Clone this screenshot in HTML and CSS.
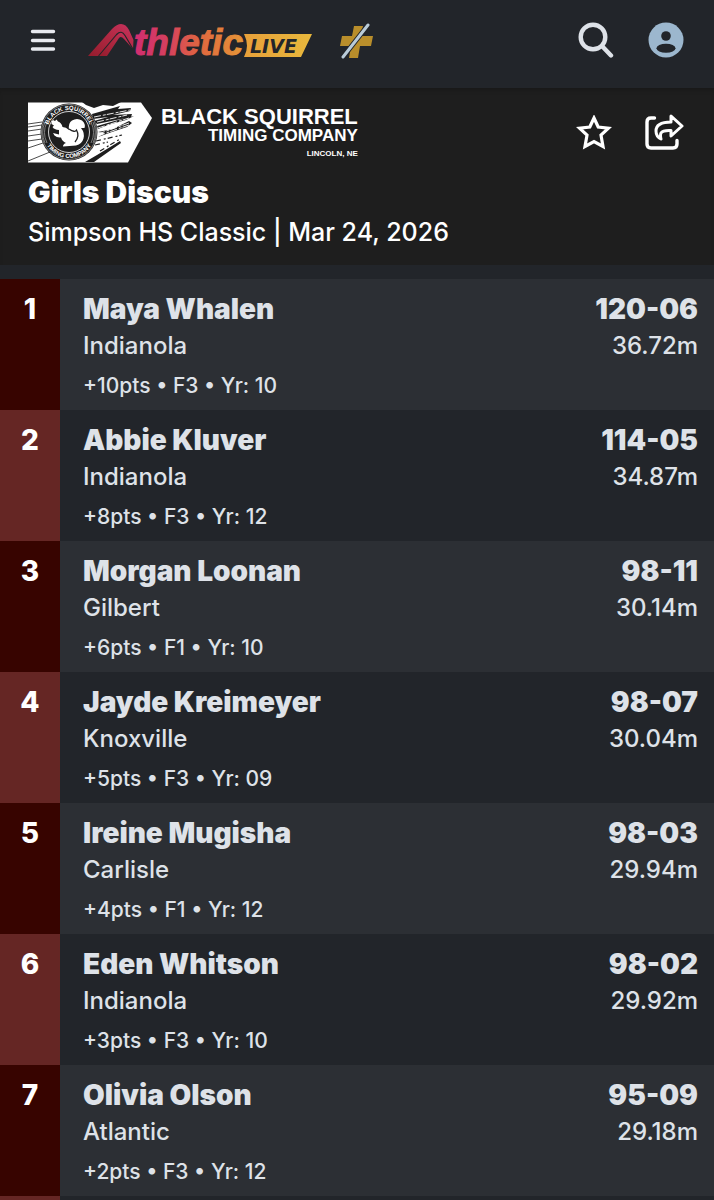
FILE: index.html
```html
<!DOCTYPE html>
<html lang="en">
<head>
<meta charset="utf-8">
<meta name="viewport" content="width=device-width, initial-scale=1">
<title>Girls Discus | Simpson HS Classic</title>
<link rel="stylesheet" href="styles.css">
</head>
<body>
<header class="topbar">
  <button class="icon-button" type="button" aria-label="Menu">
    <svg width="30" height="30" viewBox="0 0 30 30" stroke="#e8eaf0" stroke-width="3.4" stroke-linecap="round"><path d="M4.5 6.5h21M4.5 15.5h21M4.5 24h21"/></svg>
  </button>
  <a class="brand" href="#" aria-label="AthleticLIVE">
    <svg width="226" height="52" viewBox="0 -6 226 52">
      <defs>
        <linearGradient id="swoosh" x1="0" y1="1" x2="1" y2="0"><stop offset="0" stop-color="#941c2d"/><stop offset=".6" stop-color="#b42a45"/><stop offset="1" stop-color="#c83260"/></linearGradient>
        <linearGradient id="word" gradientUnits="userSpaceOnUse" x1="46" y1="0" x2="158" y2="0"><stop offset="0" stop-color="#d12d70"/><stop offset=".3" stop-color="#d5405f"/><stop offset=".6" stop-color="#e0683f"/><stop offset="1" stop-color="#e69a36"/></linearGradient>
        <linearGradient id="tag" x1="0" y1="0" x2="1" y2="0"><stop offset="0" stop-color="#e7a03a"/><stop offset="1" stop-color="#e8b83c"/></linearGradient>
      </defs>
      <path fill="url(#swoosh)" d="M0 36 24 9Q29 4 33 4 38 4 41 10L45.500 20 45 29 37 16Q33.500 10 29 15L12 36Z"/>
      <path fill="url(#swoosh)" d="M11 36 29 15Q33.500 10 37 16L45 29 36 19Q33 15.500 31 18L19 36Z"/>
      <path fill="none" stroke="#22252a" stroke-width="1.100" d="M10.500 36 28.500 14.500Q33.500 9.500 37 15.500L45 29"/>
      <text class="wordmark" x="46" y="35" fill="url(#word)" stroke="url(#word)">thletic</text>
      <path fill="url(#tag)" d="M156 14H224L213 37H156Q162 26 156 14Z"/>
      <text class="live" x="162" y="33">LIVE</text>
    </svg>
  </a>
  <a class="plus" href="#" aria-label="Plus">
    <svg width="36" height="38" viewBox="0 0 36 38"><path fill="#b98e2b" d="M15 5H24L22 15H34L32 25H21L19 37H10L12 25H1L3 15H13Z"/><path d="M4 36 29 4" stroke="#22252a" stroke-width="5"/><path d="M4 36 29 4" stroke="#b9cbd8" stroke-width="3" stroke-linecap="round"/></svg>
  </a>
  <nav class="actions" aria-label="Account">
    <button class="icon-button" type="button" aria-label="Search">
      <svg width="38" height="38" viewBox="0 0 38 38" fill="none" stroke="#dee2e8" stroke-width="4.400"><circle cx="17" cy="16" r="12.300"/><path stroke-linecap="round" d="M26 25 35 34.500"/></svg>
    </button>
    <button class="icon-button" type="button" aria-label="Profile">
      <svg width="36" height="36" viewBox="0 0 36 36"><circle cx="18" cy="18" r="17.500" fill="#9cb7ce"/><circle cx="18" cy="14" r="4.800" fill="#22252a"/><ellipse cx="18" cy="26.300" rx="9.500" ry="4.500" fill="#22252a"/></svg>
    </button>
  </nav>
</header>

<section class="event">
  <div class="event-top">
    <a class="sponsor" href="#">
      <svg width="125" height="62" viewBox="0 0 125 62" aria-hidden="true">
        <path fill="#fff" d="M0 .500H113L124 16 100 60.500H0Z"/>
        <g fill="none" stroke="#1e1e1e" stroke-width=".8"><path d="M0 22 14 20M0 25 14 23M0 29 14 27M0 34 14 32M0 39 14 37M0 46 15 41M0 59 22 50"/></g>
        <path fill="#1e1e1e" d="M54 0H93L85 4 75 3 66 6 58 3ZM64 12 78 8 92 4 90 7 103 6 102 9 85 13 104 12 103 15 88 18 69 22 66 19 80 15 65 17ZM69 24 90 18 106 14 98 18 80 23 70 27ZM70 30 85 27 101 19 104 21 99 25 84 30 70 35 77 31ZM57 60 69 53 92 39 93 41 66 60Z"/>
        <path fill="none" stroke="#fff" stroke-width=".9" stroke-dasharray="7 2 3 1" d="M66 15 102 8M69 20 99 13M70 26 101 16M70 32 101 21M70 34 101 23"/>
        <path fill="none" stroke="#1e1e1e" stroke-width="1.200" stroke-dasharray="5 3 2 2" d="M68 39 94 33M67 43 80 40M72 49 92 37"/>
        <circle cx="41" cy="30" r="28.500" fill="#1e1e1e"/>
        <g fill="none" stroke="#bdbdbd" stroke-width=".6"><circle cx="41" cy="30" r="27.500"/><path d="M17 20A26 26 0 0 0 17 41M19 20A24 24 0 0 0 19 41M65 20A26 26 0 0 1 65 41M63 20A24 24 0 0 1 63 41"/></g>
        <circle cx="41" cy="30" r="20.500" fill="#1e1e1e" stroke="#fff" stroke-width=".8"/>
        <path id="arc-top" fill="none" d="M19 30A22 22 0 0 1 63 30"/>
        <path id="arc-bottom" fill="none" d="M15 30A26 26 0 0 0 67 30"/>
        <text class="seal"><textPath href="#arc-top" startOffset="50%">BLACK SQUIRREL</textPath></text>
        <text class="seal"><textPath href="#arc-bottom" startOffset="50%">TIMING COMPANY</textPath></text>
        <path fill="#fff" d="M25 18 27 19 28.500 17.500 30 19.500Q33.500 20.500 34.500 25 38 25 41 28 40 21 44 18.500 49 15.500 54 18.500 58 22 56.500 26L53 26Q57 31 55.500 36.500 54 42 48 43.500L35 44.500Q35 42 38 41 34 39 33 35.500 29 36 26.500 33.500L25 31 27 31.500 31 32.500 31 28Q26 27.500 24.500 25L26 23.500 23.500 22Q23 19.500 25 18Z"/>
        <path fill="none" stroke="#1e1e1e" stroke-width="1.300" d="M41 27Q47 31 48.500 28 52 34 47 40"/>
      </svg>
      <span class="sponsor-text">
        <span class="sponsor-name">BLACK SQUIRREL</span>
        <span class="sponsor-sub">TIMING COMPANY</span>
        <span class="sponsor-city">LINCOLN, NE</span>
      </span>
    </a>
    <div class="event-actions">
      <button class="icon-button" type="button" aria-label="Favorite">
        <svg width="36" height="36" viewBox="0 0 36 36" fill="none" stroke="#fff" stroke-width="3.200"><path d="M18 3 22.200 12 32.500 13.200 25 20.200 27 31.500 18 26.500 9 31.500 11 20.200 3.500 13.200 13.800 12Z"/></svg>
      </button>
      <button class="icon-button" type="button" aria-label="Share">
        <svg width="40" height="38" viewBox="0 0 40 38" fill="none" stroke="#fff" stroke-width="3.400" stroke-linecap="round" stroke-linejoin="round"><path d="M10.500 4H7Q3 4 3 8V30Q3 34 7 34H29Q33 34 33 30V26.500"/><path stroke-width="3" d="M27 2 38 12 27 22V16.500Q19 16 17 19 16 21 17 25 12 22.500 12 17 12 8 27 8Z"/></svg>
      </button>
    </div>
  </div>
  <h1 class="event-title">Girls Discus</h1>
  <p class="event-meet">Simpson HS Classic | Mar 24, 2026</p>
</section>

<main class="results">
  <table class="result-table" aria-label="Girls Discus results">
    <tbody>
      <tr><th class="rank" scope="row">1</th><td class="athlete"><div class="name">Maya Whalen</div><div class="school">Indianola</div><div class="detail">+10pts • F3 • Yr: 10</div></td><td class="mark"><div class="name">120-06</div><div class="school">36.72m</div></td></tr>
      <tr><th class="rank" scope="row">2</th><td class="athlete"><div class="name">Abbie Kluver</div><div class="school">Indianola</div><div class="detail">+8pts • F3 • Yr: 12</div></td><td class="mark"><div class="name">114-05</div><div class="school">34.87m</div></td></tr>
      <tr><th class="rank" scope="row">3</th><td class="athlete"><div class="name">Morgan Loonan</div><div class="school">Gilbert</div><div class="detail">+6pts • F1 • Yr: 10</div></td><td class="mark"><div class="name">98-11</div><div class="school">30.14m</div></td></tr>
      <tr><th class="rank" scope="row">4</th><td class="athlete"><div class="name">Jayde Kreimeyer</div><div class="school">Knoxville</div><div class="detail">+5pts • F3 • Yr: 09</div></td><td class="mark"><div class="name">98-07</div><div class="school">30.04m</div></td></tr>
      <tr><th class="rank" scope="row">5</th><td class="athlete"><div class="name">Ireine Mugisha</div><div class="school">Carlisle</div><div class="detail">+4pts • F1 • Yr: 12</div></td><td class="mark"><div class="name">98-03</div><div class="school">29.94m</div></td></tr>
      <tr><th class="rank" scope="row">6</th><td class="athlete"><div class="name">Eden Whitson</div><div class="school">Indianola</div><div class="detail">+3pts • F3 • Yr: 10</div></td><td class="mark"><div class="name">98-02</div><div class="school">29.92m</div></td></tr>
      <tr><th class="rank" scope="row">7</th><td class="athlete"><div class="name">Olivia Olson</div><div class="school">Atlantic</div><div class="detail">+2pts • F3 • Yr: 12</div></td><td class="mark"><div class="name">95-09</div><div class="school">29.18m</div></td></tr>
    </tbody>
  </table>
  <div class="rail"></div>
</main>
</body>
</html>
```
FILE: styles.css
```css
* { box-sizing: border-box; }

body {
  margin: 0;
  min-height: 100vh;
  display: flex;
  flex-direction: column;
  background: #22252a;
  color: #dee2e8;
  font-family: Inter, "Liberation Sans", sans-serif;
}

svg { display: block; }

.icon-button {
  display: block;
  padding: 0;
  border: 0;
  background: none;
  cursor: pointer;
}

.topbar {
  display: flex;
  align-items: center;
  padding: 14px 30px 22px 28px;
}

.brand { margin-left: 30px; }
.plus { margin-left: 25px; }

.wordmark {
  font: italic bold 37px "Liberation Sans", sans-serif;
  stroke-width: 1px;
}

.live {
  font: italic bold 19px "DejaVu Sans", sans-serif;
  fill: #22252a;
}

.actions {
  display: flex;
  align-items: center;
  gap: 34px;
  margin-left: auto;
}

.event {
  padding: 14px 30px 13px 28px;
  background: #1e1e1e;
  color: #fff;
  box-shadow: inset 0 4px 4px -2px #191919;
}

.event-top {
  display: flex;
  justify-content: space-between;
}

.sponsor {
  display: flex;
  gap: 8px;
  color: #fff;
  text-decoration: none;
  font-family: "Liberation Sans", sans-serif;
  font-weight: bold;
}

.sponsor-text {
  display: flex;
  flex-direction: column;
  align-items: flex-end;
  padding-top: 4px;
}

.sponsor-name { font-size: 22px; line-height: 22px; }
.sponsor-sub { font-size: 17px; line-height: 16px; }
.sponsor-city { font-size: 8px; line-height: 20px; }

.seal {
  font: bold 6px "Liberation Sans", sans-serif;
  fill: #fff;
  text-anchor: middle;
}

.event-actions {
  display: flex;
  align-items: center;
  gap: 32px;
}

.event-title {
  margin: 8px 0 0;
  font-size: 30px;
  font-weight: 900;
  line-height: 40px;
}

.event-meet {
  margin: 0;
  font-size: 25px;
  font-weight: 500;
  line-height: 40px;
}

.results {
  flex: 1;
  display: flex;
  flex-direction: column;
  padding-top: 14px;
}

.result-table {
  width: 100%;
  border-collapse: collapse;
}

.result-table td,
.result-table th {
  padding: 12px 0 3px;
  vertical-align: top;
}

.result-table tr:nth-child(odd) { background: #2c2f34; }
.result-table tr:nth-child(odd) .rank { background: #370400; }

.result-table .rank {
  width: 60px;
  background: #652624;
  color: #fff;
  font-size: 28px;
  font-weight: 800;
  line-height: 36px;
}

.result-table .athlete { padding-left: 23px; }

.result-table .mark {
  padding-right: 16px;
  text-align: right;
}

.name {
  font-size: 28px;
  font-weight: 900;
  line-height: 36px;
}

.school {
  font-size: 24px;
  font-weight: 500;
  line-height: 38px;
}

.detail {
  font-size: 21px;
  font-weight: 500;
  line-height: 42px;
}

.rail {
  flex: 1;
  width: 60px;
  background: #652624;
}
```
